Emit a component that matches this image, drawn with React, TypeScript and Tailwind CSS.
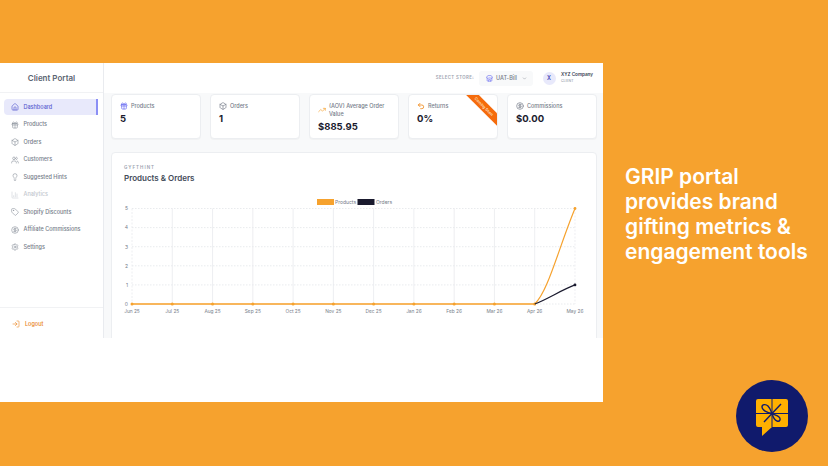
import {
  Box,
  ChartColumn,
  ChevronDown,
  CircleDollarSign,
  Gift,
  House,
  Lightbulb,
  LogIn,
  Settings,
  Store,
  Tag,
  TrendingUp,
  Undo2,
  Users,
} from "lucide-react";

const navItems = [
  { label: "Products", icon: Gift },
  { label: "Orders", icon: Box },
  { label: "Customers", icon: Users },
  { label: "Suggested Hints", icon: Lightbulb },
  { label: "Analytics", icon: ChartColumn, muted: true },
  { label: "Shopify Discounts", icon: Tag },
  { label: "Affiliate Commissions", icon: CircleDollarSign },
  { label: "Settings", icon: Settings },
];

const months = ["Jun 25", "Jul 25", "Aug 25", "Sep 25", "Oct 25", "Nov 25", "Dec 25", "Jan 26", "Feb 26", "Mar 26", "Apr 26", "May 26"];

function Sidebar() {
  return (
    <aside className="flex w-[104px] shrink-0 flex-col border-r border-[#e9ebef]">
      <div className="flex h-[30px] items-center justify-center border-b border-[#f1f2f4] text-[8px] font-semibold text-[#5b6472]">
        Client Portal
      </div>
      <nav className="flex flex-1 flex-col pt-[6px]">
        <div className="ml-1 flex h-[16px] w-[94px] items-center gap-[5px] rounded-l-[4px] border-r-2 border-[#8b8ff5] bg-[#e8e9fb] pl-[6.500px] text-[5.500px] font-medium text-[#5b5fd0]">
          <House className="size-[8px] text-[#5b5fd0]" strokeWidth={2} />
          Dashboard
        </div>
        {navItems.map(({ label, icon: Icon, muted }) => (
          <div
            key={label}
            className={`ml-1 mt-[1.500px] flex h-[16px] items-center gap-[5px] pl-[6.500px] text-[5.500px] font-medium ${muted ? "text-[#c3c7ce]" : "text-[#757c89]"}`}
          >
            <Icon className="size-[8px]" strokeWidth={1.5} />
            {label}
          </div>
        ))}
      </nav>
      <div className="flex h-[31px] items-center gap-[5px] border-t border-[#f1f2f4] pl-[12px] pt-[2px] text-[5.500px] font-medium text-[#e8821a]">
        <LogIn className="size-[8px]" strokeWidth={1.75} />
        Logout
      </div>
    </aside>
  );
}

function TopBar() {
  return (
    <header className="flex h-[30px] items-center justify-end bg-white pr-[10px]">
      <span className="mr-[5px] text-[4.300px] font-semibold tracking-[0.4px] text-[#9ca3af]">SELECT STORE:</span>
      <div className="mr-[9.500px] flex h-[15px] w-[54px] items-center gap-[3px] rounded-[3px] bg-[#f8f9fa] pl-[7px] text-[5.500px] font-medium text-[#757c89]">
        <Store className="size-[7px] text-[#6366f1]" />
        UAT-Bill
        <ChevronDown className="ml-[2px] size-[5px]" />
      </div>
      <div className="mr-[5.500px] flex size-[13px] items-center justify-center rounded-full bg-[#e8e9fb] text-[5.500px] font-semibold text-[#3f43b5]">
        X
      </div>
      <div className="w-[32px] whitespace-nowrap leading-none">
        <div className="text-[4.600px] font-semibold text-[#374151]">XYZ Company</div>
        <div className="mt-[2px] text-[3.500px] font-medium text-[#9ca3af]">CLIENT</div>
      </div>
    </header>
  );
}

function StatCard({ label, value, icon, ribbon }: { label: string; value: string; icon: React.ReactNode; ribbon?: boolean }) {
  return (
    <div className="relative h-[45px] w-[89.500px] shrink-0 overflow-hidden rounded-[4px] border border-[#eceef1] bg-white px-[8px] pt-[7px] shadow-[0_1px_1px_rgba(0,0,0,0.03)]">
      <div className="flex items-center gap-[3px] text-[5.500px] font-medium leading-[8px] text-[#757c89]">
        {icon}
        <span>{label}</span>
      </div>
      <div className="mt-[1.500px] text-[9.500px] font-bold leading-[14px] text-[#1a1a2e]">{value}</div>
      {ribbon ? (
        <div className="absolute right-[-15.500px] top-[6.500px] flex h-[9px] w-[56px] rotate-45 items-center justify-center bg-[#f56b0c] text-[3.800px] font-semibold text-[#fde3c8]">
          Coming Soon
        </div>
      ) : null}
    </div>
  );
}

function TrafficChart() {
  const xs = months.map((_, i) => 20 + i * 40.27);
  const y = (v: number) => 23.5 + (5 - v) * 19.1;
  return (
    <svg width="484" height="140" viewBox="0 0 484 140" className="block" fontFamily="Inter, sans-serif">
      <rect x="205" y="14" width="17" height="6" fill="#f6a22e" />
      <text x="223" y="19" fontSize="5" fill="#757c89">Products</text>
      <rect x="245.500" y="14" width="17" height="6" fill="#1a1a2e" />
      <text x="264" y="19" fontSize="5" fill="#757c89">Orders</text>
      {[0, 1, 2, 3, 4, 5].map((v) => (
        <g key={v}>
          <line x1="20" x2="463" y1={y(v)} y2={y(v)} stroke="#dfe2e6" strokeWidth="0.7" strokeDasharray="1.5 1.5" />
          <text x="16" y={y(v) + 1.8} fontSize="5" fill="#757c89" textAnchor="end">{v}</text>
        </g>
      ))}
      {xs.map((x, i) => (
        <g key={x}>
          <line x1={x} x2={x} y1={y(5)} y2={y(0)} stroke="#e8eaed" strokeWidth="0.8" strokeDasharray={i === 0 || i === 11 ? "2 1.5" : undefined} />
          <text x={x} y={y(0) + 9} fontSize="4.8" fill="#757c89" textAnchor="middle">{months[i]}</text>
        </g>
      ))}
      <line x1="20" x2="422.700" y1={y(0)} y2={y(0)} stroke="#f8b65c" strokeWidth="2" />
      {xs.slice(0, 11).map((x) => (
        <circle key={x} cx={x} cy={y(0)} r="1.5" fill="#f6a22e" />
      ))}
      <path d={`M422.700 ${y(0)} C436 ${y(0) - 12} 447 ${y(3)} 463 ${y(5)}`} fill="none" stroke="#f6a22e" strokeWidth="1.2" />
      <path d={`M422.700 ${y(0)} C436 ${y(0) - 5} 448 ${y(0.7)} 463 ${y(1)}`} fill="none" stroke="#1a1a2e" strokeWidth="1.2" />
      <circle cx="463" cy={y(5)} r="1.4" fill="#f6a22e" />
      <circle cx="463" cy={y(1)} r="1.4" fill="#1a1a2e" />
    </svg>
  );
}

function Dashboard() {
  return (
    <div className="mt-[63px] flex h-[339px] w-[603px] shrink-0 flex-col bg-white">
      <div className="flex h-[275px] shrink-0">
        <Sidebar />
        <main className="flex min-w-0 flex-1 flex-col">
          <TopBar />
          <div className="flex-1 overflow-hidden bg-[#f8f9fa] pl-[7px] pt-[1px]">
            <div className="flex gap-[9.500px]">
              <StatCard label="Products" value="5" icon={<Gift className="size-[8px] text-[#6366f1]" />} />
              <StatCard label="Orders" value="1" icon={<Box className="size-[8px] text-[#757c89]" />} />
              <StatCard
                label="(AOV) Average Order Value"
                value="$885.95"
                icon={<TrendingUp className="size-[8px] shrink-0 text-[#f6a22e]" />}
              />
              <StatCard label="Returns" value="0%" ribbon icon={<Undo2 className="size-[8px] text-[#f08a1c]" strokeWidth={2.5} />} />
              <StatCard label="Commissions" value="$0.00" icon={<CircleDollarSign className="size-[8px] text-[#757c89]" />} />
            </div>
            <section className="mt-[13px] h-[200px] w-[486px] rounded-[4px] border border-[#eceef1] bg-white">
              <div className="px-[12px] pb-[1px] pt-[12px]">
                <div className="text-[4.500px] font-semibold leading-[6px] tracking-[1px] text-[#9ca3af]">GYFTHINT</div>
                <div className="mt-[1px] text-[8px] font-semibold leading-[12px] text-[#434b59]">Products &amp; Orders</div>
              </div>
              <TrafficChart />
            </section>
          </div>
        </main>
      </div>
    </div>
  );
}

function GiftLogo() {
  return (
    <svg width="72" height="72" viewBox="0 0 72 72" className="block">
      <circle cx="36" cy="36" r="36" fill="#101a6c" />
      <path d="M22 19h28a2 2 0 0 1 2 2v24a2 2 0 0 1-2 2H36L26 56v-9h-4a2 2 0 0 1-2-2V21a2 2 0 0 1 2-2z" fill="#ffb000" />
      <path d="M20 33.500h32M36 19v28" stroke="#101a6c" strokeWidth="1" />
      <path d="M36 33.500C31 33 26 30 26 27C26 24 30 24 32 26C34 28 35 31 36 33.500C38 35 41 35 43 37C45 39 44 42 41 41C38 40 37 37 36 33.500M36 33.500L45 24M36 33.500L28 42" fill="none" stroke="#101a6c" strokeWidth="1.4" />
    </svg>
  );
}

export default function App() {
  return (
    <div className="flex h-[466px] w-[828px] overflow-hidden bg-[#f6a22e] font-['Inter',sans-serif]">
      <Dashboard />
      <div className="flex flex-1 flex-col pl-[22px] pt-[164px]">
        <h1 className="text-[21px] font-semibold leading-[25px] text-white">
          GRIP portal
          <br />
          provides brand
          <br />
          gifting metrics &amp;
          <br />
          engagement tools
        </h1>
        <div className="ml-[111px] mt-[116px]">
          <GiftLogo />
        </div>
      </div>
    </div>
  );
}
